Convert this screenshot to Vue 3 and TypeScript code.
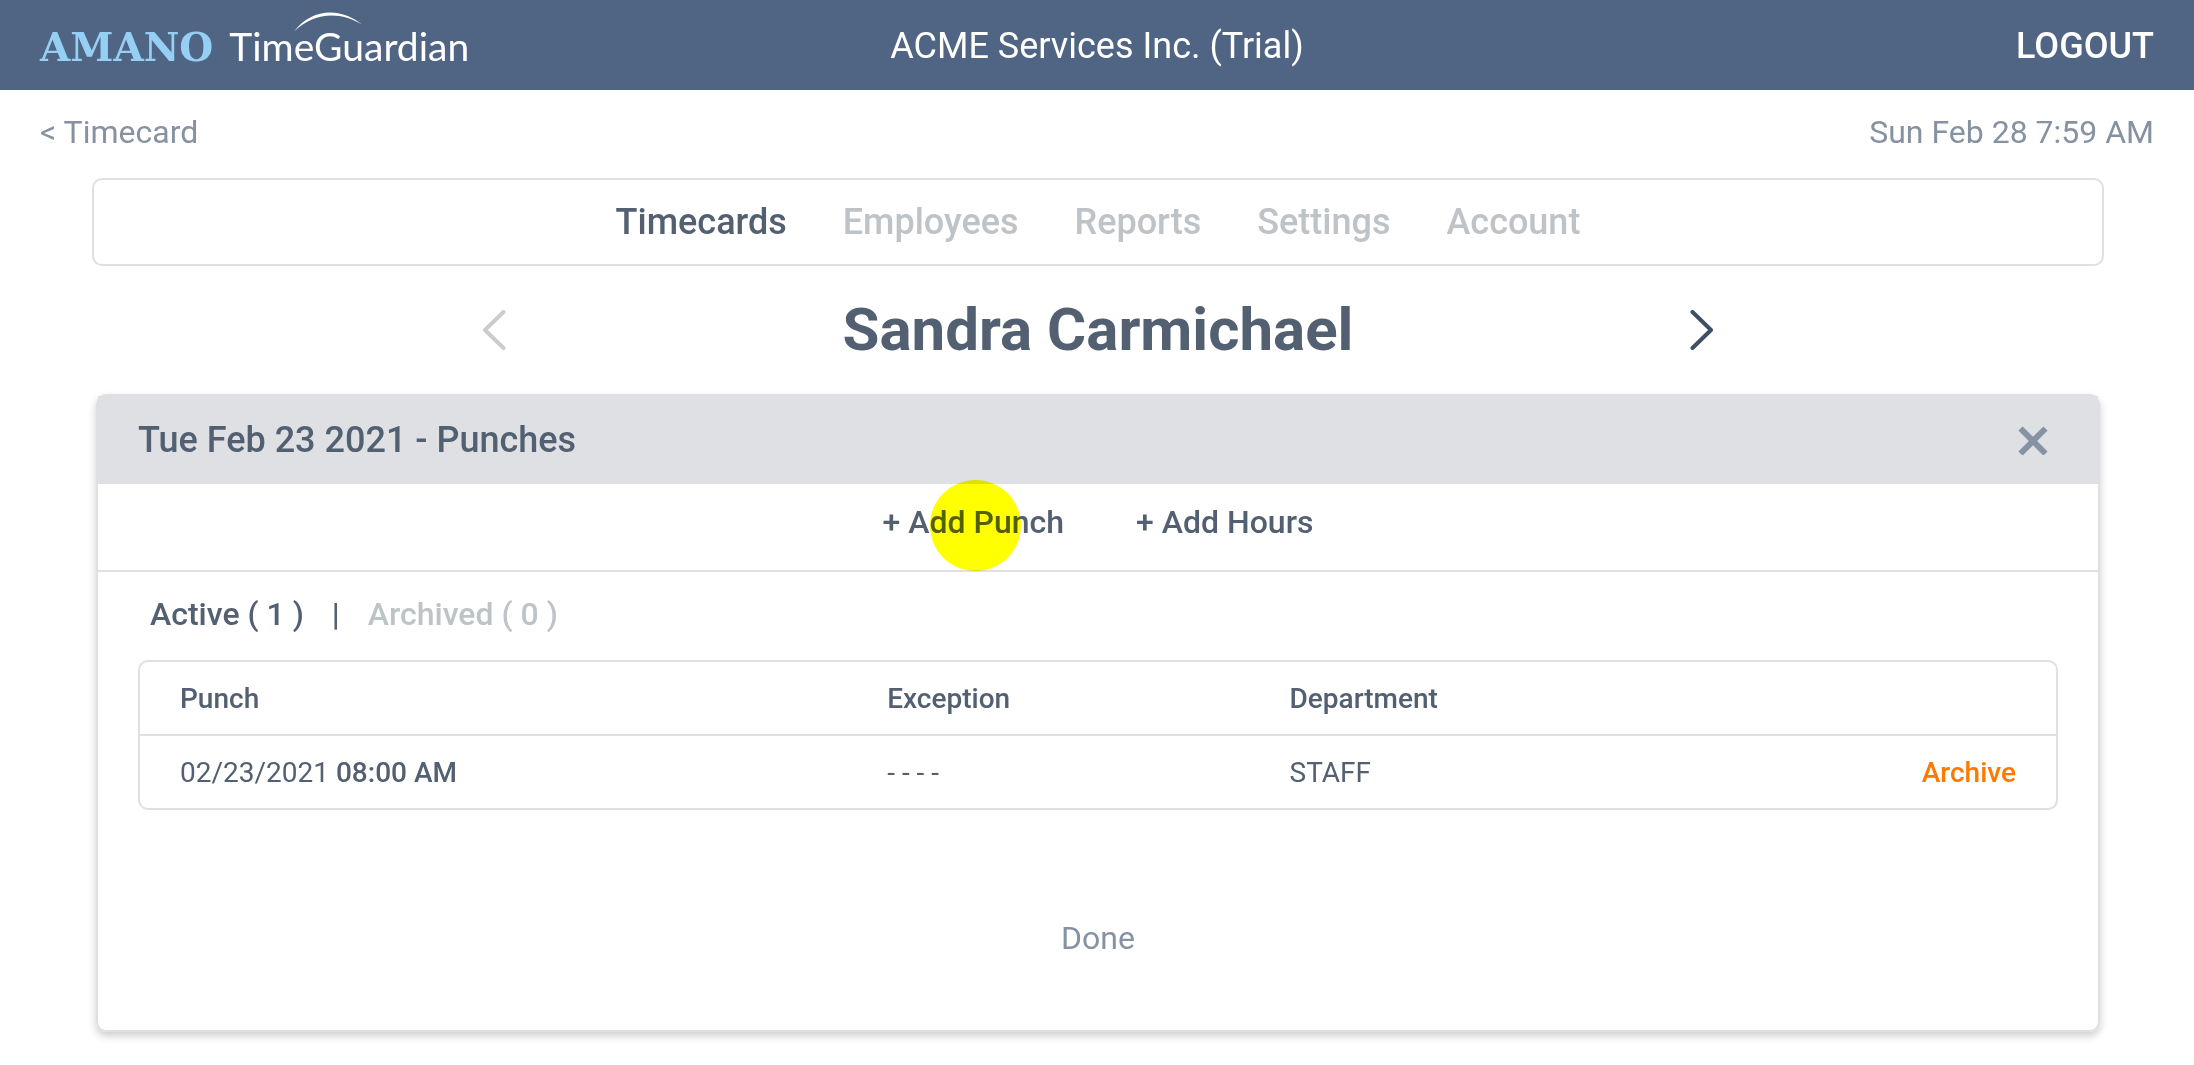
<script setup lang="ts">
import { ref } from 'vue'

interface Punch {
  date: string
  time: string
  exception: string
  department: string
}

const sections = ['Timecards', 'Employees', 'Reports', 'Settings', 'Account']
const currentSection = ref('Timecards')
const view = ref<'active' | 'archived'>('active')

const punches: Punch[] = [
  { date: '02/23/2021', time: '08:00 AM', exception: '- - - -', department: 'STAFF' },
]
</script>

<template>
  <div class="page">
    <header class="topbar">
      <a class="brand" href="#">
        <span class="brand-maker">AMANO</span>
        <span class="brand-product">
          TimeGuardian
          <svg class="brand-arc" viewBox="0 0 68 20" width="68" height="20" aria-hidden="true">
            <path d="M0 19.500C18 -4 46 -5 68 12.500C46 -1 20 0 0 19.500Z" fill="#fff" />
          </svg>
        </span>
      </a>
      <div class="company">ACME Services Inc. (Trial)</div>
      <button class="logout" type="button">LOGOUT</button>
    </header>

    <div class="subbar">
      <a class="back" href="#">&lt; Timecard</a>
      <time>Sun Feb 28 7:59 AM</time>
    </div>

    <main class="content">
      <nav class="sections">
        <a
          v-for="name in sections"
          :key="name"
          href="#"
          :class="{ current: name === currentSection }"
          @click.prevent="currentSection = name"
        >{{ name }}</a>
      </nav>

      <div class="employee">
        <button class="step" type="button" aria-label="Previous employee">
          <svg viewBox="0 0 24 40" width="24" height="40" aria-hidden="true">
            <path d="M21.500 2L3 20L21.500 38" fill="none" stroke="#ccc" stroke-width="4" stroke-linecap="round" stroke-linejoin="round" />
          </svg>
        </button>
        <h1>Sandra Carmichael</h1>
        <button class="step" type="button" aria-label="Next employee">
          <svg viewBox="0 0 24 40" width="24" height="40" aria-hidden="true">
            <path d="M2.500 2L21 20L2.500 38" fill="none" stroke="#3f4f66" stroke-width="4" stroke-linecap="round" stroke-linejoin="round" />
          </svg>
        </button>
      </div>

      <section class="panel">
        <div class="panel-head">
          <h2>Tue Feb 23 2021 - Punches</h2>
          <button class="close" type="button" aria-label="Close">
            <svg viewBox="0 0 30 30" width="30" height="30" aria-hidden="true">
              <path d="M2.500 3.500L27.500 28.500M27.500 3.500L2.500 28.500" stroke="#8793a2" stroke-width="6" />
            </svg>
          </button>
        </div>

        <div class="actions">
          <button class="add" type="button">+ Add Punch<span class="pointer" aria-hidden="true"></span></button>
          <button class="add" type="button">+ Add Hours</button>
        </div>

        <div class="views">
          <button type="button" :class="{ current: view === 'active' }" @click="view = 'active'">Active ( 1 )</button>
          <span class="divider">|</span>
          <button type="button" :class="{ current: view === 'archived' }" @click="view = 'archived'">Archived ( 0 )</button>
        </div>

        <div class="table-frame">
          <table>
            <colgroup>
              <col class="col-punch" />
              <col class="col-exception" />
              <col class="col-department" />
              <col />
            </colgroup>
            <thead>
              <tr>
                <th>Punch</th>
                <th>Exception</th>
                <th>Department</th>
                <th></th>
              </tr>
            </thead>
            <tbody>
              <tr v-for="punch in punches" :key="punch.date + punch.time">
                <td>{{ punch.date }} <strong>{{ punch.time }}</strong></td>
                <td>{{ punch.exception }}</td>
                <td>{{ punch.department }}</td>
                <td class="row-action"><button type="button">Archive</button></td>
              </tr>
            </tbody>
          </table>
        </div>

        <div class="panel-foot">
          <button class="done" type="button">Done</button>
        </div>
      </section>
    </main>
  </div>
</template>

<style>
body {
  background: #fff;
}
</style>

<style scoped>
.page {
  font-family: Roboto, "Liberation Sans", sans-serif;
  font-size: 32px;
  line-height: 36px;
  color: #536072;
}

button {
  padding: 0;
  border: 0;
  background: none;
  color: inherit;
  font: inherit;
  cursor: pointer;
}

a {
  color: inherit;
  text-decoration: none;
}

.topbar {
  display: grid;
  grid-template-columns: 1fr auto 1fr;
  align-items: center;
  height: 88px;
  padding: 2px 40px 0;
  background: #506583;
  color: #fff;
  font-size: 36px;
}

.brand {
  display: flex;
  align-items: baseline;
  gap: 16px;
}

.brand-maker {
  font-family: "DejaVu Serif", serif;
  font-size: 39px;
  font-weight: 700;
  color: #95cff4;
}

.brand-product {
  position: relative;
  font-family: Lato, "Open Sans", sans-serif;
  font-size: 39px;
}

.brand-arc {
  position: absolute;
  left: 65px;
  top: -16px;
}

.logout {
  justify-self: end;
  font-weight: 500;
}

.subbar {
  display: flex;
  justify-content: space-between;
  padding: 24px 40px 28px;
  color: #8692a1;
}

.content {
  padding: 0 90px 32px 92px;
}

.sections {
  display: flex;
  justify-content: center;
  align-items: center;
  gap: 56px;
  height: 84px;
  border: 2px solid #dee0e4;
  border-radius: 10px;
  font-size: 36px;
  font-weight: 500;
  color: #bec3c8;
}

.sections .current {
  color: #536072;
}

.employee {
  display: flex;
  justify-content: space-between;
  align-items: center;
  max-width: 1232px;
  height: 128px;
  margin: 0 auto;
}

.employee h1 {
  margin: 0;
  font-size: 60px;
  line-height: 72px;
  font-weight: 700;
}

.step,
.close {
  display: flex;
}

.panel {
  margin: 0 4px;
  border: 2px solid #dee0e4;
  border-radius: 10px;
  box-shadow: 0 4px 8px rgba(0, 0, 0, 0.2);
}

.panel-head {
  display: flex;
  justify-content: space-between;
  align-items: center;
  height: 88px;
  padding: 0 50px 0 40px;
  background: #dee0e4;
}

.panel-head h2 {
  margin: 0;
  font-size: 36px;
  font-weight: 500;
}

.actions {
  display: flex;
  justify-content: center;
  gap: 72px;
  padding: 20px 0 30px;
  border-bottom: 2px solid #dee0e4;
  font-weight: 500;
}

.add {
  position: relative;
}

.pointer {
  position: absolute;
  left: 47px;
  top: -24px;
  width: 91px;
  height: 91px;
  border-radius: 50%;
  background: #ff0;
  mix-blend-mode: multiply;
}

.views {
  display: flex;
  gap: 28px;
  padding: 24px 52px 28px;
  font-weight: 500;
  color: #bec3c8;
}

.views .current,
.views .divider {
  color: #536072;
}

.table-frame {
  margin: 0 40px;
  border: 2px solid #dee0e4;
  border-radius: 10px;
}

table {
  width: 100%;
  table-layout: fixed;
  border-spacing: 0;
  font-size: 28px;
}

.col-punch {
  width: 39%;
}

.col-exception {
  width: 21%;
}

.col-department {
  width: 20%;
}

th,
td {
  height: 70px;
  padding: 2px 0 0;
  text-align: left;
}

th {
  border-bottom: 2px solid #dee0e4;
  font-weight: 500;
}

th:first-child,
td:first-child {
  padding-left: 40px;
}

td strong {
  font-weight: 500;
}

.row-action {
  padding-right: 40px;
  text-align: right;
  font-weight: 500;
  color: #ff7800;
}

.panel-foot {
  display: flex;
  justify-content: center;
  padding: 110px 0 74px;
  color: #8692a1;
}
</style>
